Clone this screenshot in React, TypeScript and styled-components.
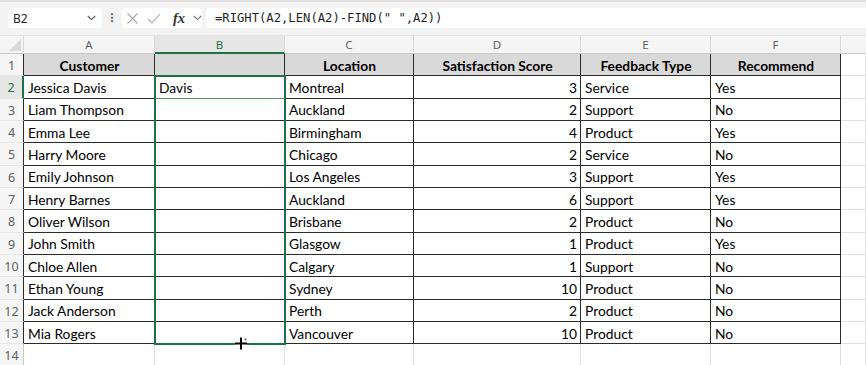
import React from 'react'
import styled, { createGlobalStyle } from 'styled-components'

const GlobalStyle = createGlobalStyle`
  html, body {
    margin: 0;
    padding: 0;
    background: #ffffff;
  }
`

const green = '#1e7145'
const tableLine = '#2b2b2b'
const gridLine = '#e1e1e1'
const headLine = '#c8c8c8'

const colWidths = [24, 131, 130, 129, 167, 130, 130, 25]
const letters = ['A', 'B', 'C', 'D', 'E', 'F', '']

const rows: (string | number)[][] = [
  ['Jessica Davis', 'Davis', 'Montreal', 3, 'Service', 'Yes'],
  ['Liam Thompson', '', 'Auckland', 2, 'Support', 'No'],
  ['Emma Lee', '', 'Birmingham', 4, 'Product', 'Yes'],
  ['Harry Moore', '', 'Chicago', 2, 'Service', 'No'],
  ['Emily Johnson', '', 'Los Angeles', 3, 'Support', 'Yes'],
  ['Henry Barnes', '', 'Auckland', 6, 'Support', 'Yes'],
  ['Oliver Wilson', '', 'Brisbane', 2, 'Product', 'No'],
  ['John Smith', '', 'Glasgow', 1, 'Product', 'Yes'],
  ['Chloe Allen', '', 'Calgary', 1, 'Support', 'No'],
  ['Ethan Young', '', 'Sydney', 10, 'Product', 'No'],
  ['Jack Anderson', '', 'Perth', 2, 'Product', 'No'],
  ['Mia Rogers', '', 'Vancouver', 10, 'Product', 'No'],
]

const headers = ['Customer', '', 'Location', 'Satisfaction Score', 'Feedback Type', 'Recommend']

const Page = styled('div')`
  width: 866px;
  height: 365px;
  overflow: hidden;
  background: #ffffff;
  display: flex;
  flex-direction: column;
`

const Toolbar = styled('div')`
  height: 36px;
  flex-shrink: 0;
  box-sizing: border-box;
  background: #f3f3f3;
  border-top: 2px solid #e2e0e0;
  border-bottom: 1px solid #e4e4e4;
  display: flex;
  align-items: flex-start;
  padding: 6px 0 0 8px;
`

const NameBox = styled('div')`
  width: 94px;
  height: 20px;
  background: #ffffff;
  border-radius: 4px;
  display: flex;
  align-items: center;
  justify-content: space-between;
  padding: 0 6px 0 5px;
  box-sizing: border-box;
  font-family: 'Noto Sans', sans-serif;
  font-size: 12px;
  color: #262626;
`

const Dots = styled('div')`
  width: 20px;
  height: 20px;
  display: flex;
  align-items: center;
  justify-content: center;
  color: #7a7a7a;
  font-family: 'DejaVu Sans', sans-serif;
  font-size: 12px;
  font-weight: bold;
`

const FuncBox = styled('div')`
  width: 80px;
  height: 20px;
  background: #ffffff;
  border-radius: 4px;
  display: flex;
  align-items: center;
  padding: 0 0 0 4px;
  box-sizing: border-box;
  gap: 8px;
  margin-right: 4px;
`

const Fx = styled('span')`
  font-family: 'Liberation Serif', serif;
  font-style: italic;
  font-weight: bold;
  font-size: 14.5px;
  color: #333333;
  margin-left: 4px;
`

const FormulaBox = styled('div')`
  flex: 1;
  height: 20px;
  background: #ffffff;
  border-radius: 4px 0 0 4px;
  display: flex;
  align-items: center;
  padding-left: 9px;
  font-family: 'DejaVu Sans Mono', monospace;
  font-size: 12.2px;
  color: #1f1f1f;
  white-space: pre;
`

const SheetWrap = styled('div')`
  position: relative;
  flex-shrink: 0;
`

const Sheet = styled('div')`
  display: grid;
  grid-template-columns: ${colWidths.map((w) => `${w}px`).join(' ')};
  grid-template-rows: 18px repeat(14, 22.334px);
`

interface CellProps {
  $bg?: string
  $right?: string
  $bottom?: string
  $align?: 'left' | 'center' | 'right'
  $bold?: boolean
}

const Cell = styled('div')<CellProps>`
  box-sizing: border-box;
  background: ${({ $bg }) => $bg || '#ffffff'};
  border-right: 1px solid ${({ $right }) => $right || gridLine};
  border-bottom: 1px solid ${({ $bottom }) => $bottom || gridLine};
  display: flex;
  align-items: center;
  justify-content: ${({ $align }) =>
    $align === 'center' ? 'center' : $align === 'right' ? 'flex-end' : 'flex-start'};
  padding: 1px 3px 0 4px;
  overflow: hidden;
  white-space: nowrap;
  font-family: Lato, 'Open Sans', sans-serif;
  font-size: 13.8px;
  font-weight: ${({ $bold }) => ($bold ? 700 : 400)};
  color: #000000;
`

const HeadCell = styled('div')<{ $active?: boolean; $last?: boolean }>`
  box-sizing: border-box;
  background: ${({ $active }) => ($active ? '#e6e6e6' : '#f5f5f5')};
  border-right: 1px solid ${({ $last }) => ($last ? '#f5f5f5' : '#d9d9d9')};
  border-bottom: ${({ $active }) => ($active ? `2px solid ${green}` : `1px solid ${headLine}`)};
  display: flex;
  align-items: center;
  justify-content: center;
  font-family: 'Noto Sans', sans-serif;
  font-size: 11.5px;
  color: ${({ $active }) => ($active ? green : '#5f5f5f')};
`

const RowHead = styled('div')<{ $active?: boolean; $edge?: boolean }>`
  box-sizing: border-box;
  background: ${({ $active }) => ($active ? '#e6e6e6' : '#f5f5f5')};
  border-right: ${({ $active, $edge }) =>
    $active ? `2px solid ${green}` : `1px solid ${$edge ? tableLine : headLine}`};
  border-bottom: 1px solid #e6e6e6;
  display: flex;
  align-items: center;
  justify-content: center;
  padding-top: 2px;
  font-family: 'Noto Sans', sans-serif;
  font-size: 12.5px;
  color: ${({ $active }) => ($active ? green : '#5f5f5f')};
`

const Corner = styled('div')`
  box-sizing: border-box;
  background: #f5f5f5;
  border-right: 1px solid #d9d9d9;
  border-bottom: 1px solid ${headLine};
  display: flex;
  align-items: flex-end;
  justify-content: flex-end;
  padding: 0 2px 2px 0;
`

const Selection = styled('div')`
  position: absolute;
  left: 154px;
  top: 39px;
  width: 132px;
  height: 270px;
  box-sizing: border-box;
  border: 2px solid ${green};
  pointer-events: none;
`

const Cursor = styled('svg')`
  position: absolute;
  left: 235px;
  top: 301px;
`

function CancelIcon() {
  return (
    <svg width="13" height="13" viewBox="0 0 13 13">
      <path d="M1.5 1.5 L11.5 11.5 M11.5 1.5 L1.5 11.5" stroke="#a8a8a8" strokeWidth="1.1" fill="none" />
    </svg>
  )
}

function CheckIcon() {
  return (
    <svg width="14" height="13" viewBox="0 0 14 13">
      <path d="M1 7 L5 11 L13 2" stroke="#a8a8a8" strokeWidth="1.1" fill="none" />
    </svg>
  )
}

function Chevron({ color = '#555555' }: { color?: string }) {
  return (
    <svg width="9" height="6" viewBox="0 0 9 6">
      <path d="M0.8 1 L4.5 4.6 L8.2 1" stroke={color} strokeWidth="1.1" fill="none" />
    </svg>
  )
}

function App() {
  return (
    <Page>
      <GlobalStyle />
      <Toolbar>
        <NameBox>
          <span>B2</span>
          <Chevron />
        </NameBox>
        <Dots>⋮</Dots>
        <FuncBox>
          <CancelIcon />
          <CheckIcon />
          <Fx>fx</Fx>
          <Chevron color="#777777" />
        </FuncBox>
        <FormulaBox>=RIGHT(A2,LEN(A2)-FIND(" ",A2))</FormulaBox>
      </Toolbar>

      <SheetWrap>
        <Sheet>
          <Corner>
            <svg width="12" height="12" viewBox="0 0 12 12">
              <path d="M12 0 L12 12 L0 12 Z" fill="#dadada" />
            </svg>
          </Corner>
          {letters.map((letter, i) => (
            <HeadCell key={`h${i}`} $active={letter === 'B'} $last={i === letters.length - 1}>
              {letter}
            </HeadCell>
          ))}

          <RowHead $edge>1</RowHead>
          {headers.map((text, i) => (
            <Cell key={`t${i}`} $bg="#d9d9d9" $right={tableLine} $bottom={tableLine} $align="center" $bold>
              {text}
            </Cell>
          ))}
          <Cell />

          {rows.map((row, r) => (
            <React.Fragment key={`r${r}`}>
              <RowHead $active={r === 0} $edge>
                {r + 2}
              </RowHead>
              {row.map((value, c) => (
                <Cell
                  key={`c${c}`}
                  $right={tableLine}
                  $bottom={r === 0 && c === 1 ? '#4f9a6d' : tableLine}
                  $align={typeof value === 'number' ? 'right' : 'left'}
                >
                  {value}
                </Cell>
              ))}
              <Cell />
            </React.Fragment>
          ))}

          <RowHead>14</RowHead>
          {letters.map((_, i) => (
            <Cell key={`e${i}`} />
          ))}
        </Sheet>

        <Selection />
        <Cursor width="14" height="14" viewBox="0 0 14 14">
          <path d="M6 0.5 L6 12.5 M0 6.5 L12 6.5" stroke="#ffffff" strokeWidth="3.6" />
          <path d="M6 0.5 L6 12.5 M0 6.5 L12 6.5" stroke="#000000" strokeWidth="2" />
          <circle cx="10.5" cy="2.5" r="1" fill="#555555" />
        </Cursor>
      </SheetWrap>
    </Page>
  )
}

export default App
